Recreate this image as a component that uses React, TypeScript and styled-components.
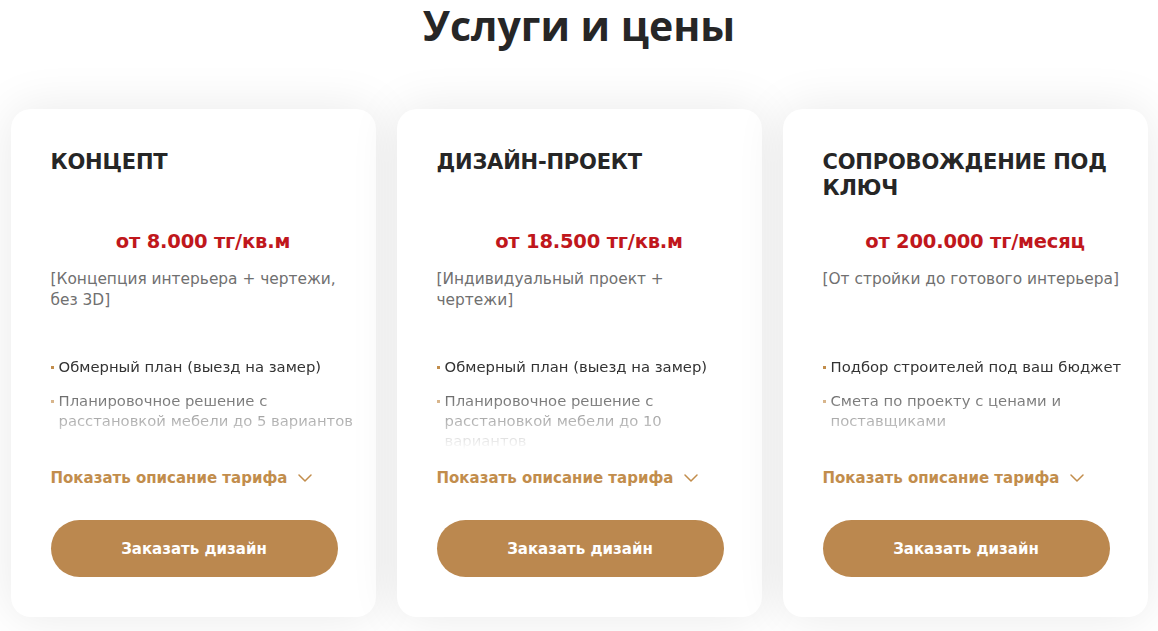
import React from "react";
import styled, { createGlobalStyle } from "styled-components";

const GlobalStyle = createGlobalStyle`
  html, body { margin: 0; padding: 0; background: #ffffff; }
  * { box-sizing: border-box; }
`;

const Page = styled.section`
  width: 1158px;
  height: 631px;
  overflow: hidden;
  background: #ffffff;
  font-family: "DejaVu Sans", "Noto Sans", sans-serif;
`;

const Heading = styled.h2`
  margin: 0;
  padding-top: 0;
  height: 109px;
  text-align: center;
  font-family: "Open Sans", "Noto Sans", sans-serif;
  font-weight: 700;
  font-size: 41px;
  line-height: 50px;
  color: #262626;
`;

const Grid = styled.div`
  display: grid;
  grid-template-columns: repeat(3, 365px);
  gap: 21px;
  justify-content: center;
`;

const Card = styled.article`
  background: #ffffff;
  border-radius: 20px;
  box-shadow: 0 0 50px rgba(0, 0, 0, 0.09);
  padding: 40px 20px 40px 40px;
  display: flex;
  flex-direction: column;
  height: 508px;
`;

const Title = styled.h3`
  margin: 0;
  height: 80px;
  font-weight: 700;
  font-size: 21px;
  line-height: 26px;
  letter-spacing: -0.2px;
  text-transform: uppercase;
  color: #262626;
`;

const Price = styled.div`
  text-align: center;
  font-weight: 700;
  font-size: 19.5px;
  line-height: 26px;
  letter-spacing: -0.2px;
  color: #c0171c;
`;

const Description = styled.p`
  margin: 14px 0 0;
  height: 88px;
  font-size: 15.4px;
  line-height: 21px;
  color: #707070;
  font-weight: 400;
`;

const Features = styled.ul`
  list-style: none;
  margin: 0;
  padding: 0;
  height: 100px;
  overflow: hidden;
  display: flex;
  flex-direction: column;
  gap: 14px;
  -webkit-mask-image: linear-gradient(to bottom, #000 18%, rgba(0, 0, 0, 0) 92%);
  mask-image: linear-gradient(to bottom, #000 18%, rgba(0, 0, 0, 0) 92%);
`;

const Feature = styled.li`
  position: relative;
  flex-shrink: 0;
  padding-left: 8px;
  font-size: 14.8px;
  line-height: 20px;
  color: #333333;
  &::before {
    content: "";
    position: absolute;
    left: 0;
    top: 9px;
    width: 3px;
    height: 3px;
    background: #c28d4c;
  }
`;

const Toggle = styled.button`
  margin-top: 11px;
  padding: 0;
  border: none;
  background: none;
  display: flex;
  align-items: center;
  gap: 11px;
  height: 20px;
  white-space: nowrap;
  font-family: inherit;
  font-weight: 700;
  font-size: 15px;
  line-height: 20px;
  color: #c28d4c;
  cursor: pointer;
  align-self: flex-start;
`;

const OrderButton = styled.button`
  margin-top: 32px;
  width: 287px;
  height: 57px;
  border: none;
  border-radius: 29px;
  background: #bb884f;
  color: #ffffff;
  font-family: inherit;
  font-weight: 700;
  font-size: 15px;
  cursor: pointer;
`;

const Chevron = () => (
  <svg width="14" height="8" viewBox="0 0 14 8" fill="none">
    <path d="M1 1l6 6 6-6" stroke="#c28d4c" strokeWidth="1.5" strokeLinecap="round" strokeLinejoin="round" />
  </svg>
);

type Plan = { title: string; price: string; desc: string; features: string[] };

const plans: Plan[] = [
  {
    title: "Концепт",
    price: "от 8.000 тг/кв.м",
    desc: "[Концепция интерьера + чертежи, без 3D]",
    features: [
      "Обмерный план (выезд на замер)",
      "Планировочное решение с расстановкой мебели до 5 вариантов",
      "Коллажи материалов и мебели, без 3D",
    ],
  },
  {
    title: "Дизайн-проект",
    price: "от 18.500 тг/кв.м",
    desc: "[Индивидуальный проект + чертежи]",
    features: [
      "Обмерный план (выезд на замер)",
      "Планировочное решение с расстановкой мебели до 10 вариантов",
      "Фотореалистичная 3D-визуализация",
    ],
  },
  {
    title: "Сопровождение под ключ",
    price: "от 200.000 тг/месяц",
    desc: "[От стройки до готового интерьера]",
    features: [
      "Подбор строителей под ваш бюджет",
      "Смета по проекту с ценами и поставщиками",
      "Тендер мебельных компаний",
    ],
  },
];

export default function App() {
  return (
    <Page>
      <GlobalStyle />
      <Heading>Услуги и цены</Heading>
      <Grid>
        {plans.map((p) => (
          <Card key={p.title}>
            <Title>{p.title}</Title>
            <Price>{p.price}</Price>
            <Description>{p.desc}</Description>
            <Features>
              {p.features.map((f) => (
                <Feature key={f}>{f}</Feature>
              ))}
            </Features>
            <Toggle>
              Показать описание тарифа
              <Chevron />
            </Toggle>
            <OrderButton>Заказать дизайн</OrderButton>
          </Card>
        ))}
      </Grid>
    </Page>
  );
}
